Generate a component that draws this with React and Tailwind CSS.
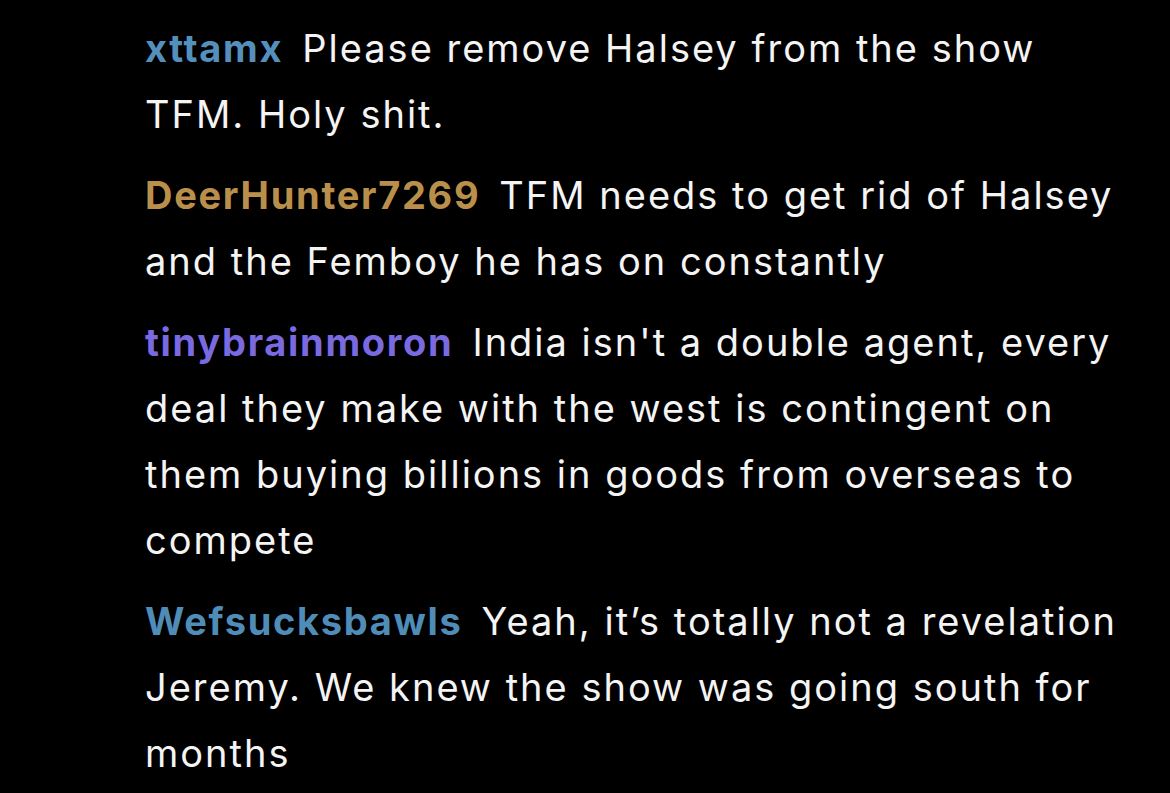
import React from 'react';

const comments = [
  {
    user: 'xttamx',
    color: 'text-[#5590bd]',
    text: 'Please remove Halsey from the show TFM. Holy shit.',
  },
  {
    user: 'DeerHunter7269',
    color: 'text-[#b98f4b]',
    text: 'TFM needs to get rid of Halsey and the Femboy he has on constantly',
  },
  {
    user: 'tinybrainmoron',
    color: 'text-[#7a6ae0]',
    text: "India isn't a double agent, every deal they make with the west is contingent on them buying billions in goods from overseas to compete",
  },
  {
    user: 'Wefsucksbawls',
    color: 'text-[#4f8db8]',
    text: 'Yeah, it’s totally not a revelation Jeremy. We knew the show was going south for months',
  },
];

const App = () => {
  return (
    <div
      className="w-[1170px] h-[793px] bg-black overflow-hidden pt-[15px] pl-[145px] pr-[40px]"
      style={{ fontFamily: 'Inter, "Noto Sans", sans-serif' }}
    >
      {comments.map((c) => (
        <p key={c.user} className="text-[38px] leading-[66px] tracking-[2px] text-[#f4f4f4] mb-[15px]">
          <span className={`${c.color} font-bold tracking-[1.7px] mr-[19px]`}>{c.user}</span>
          {c.text}
        </p>
      ))}
    </div>
  );
};

export default App;
